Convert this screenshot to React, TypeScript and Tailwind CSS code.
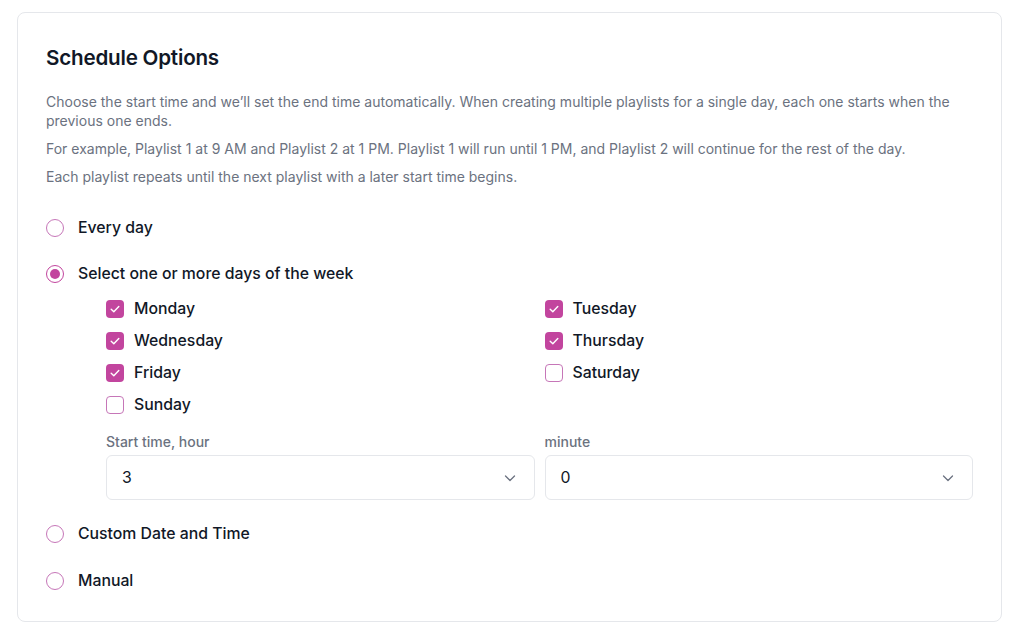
import React, { FC, useState } from 'react'

const days = ['Monday', 'Tuesday', 'Wednesday', 'Thursday', 'Friday', 'Saturday', 'Sunday']

const Radio: FC<{ checked: boolean; label: string; onClick: () => void }> = ({ checked, label, onClick }) => (
  <button className="flex items-center gap-[14px] h-[24px] text-left" onClick={onClick}>
    <span
      className={
        checked
          ? 'flex items-center justify-center w-[18px] h-[18px] rounded-full border-[1.5px] border-[#c2459e] bg-white'
          : 'w-[18px] h-[18px] rounded-full border-[1.5px] border-[#c676b8] bg-white'
      }
    >
      {checked && <span className="w-[10px] h-[10px] rounded-full bg-[#c2459e]" />}
    </span>
    <span className="text-[15.8px] font-medium text-[#111827]">{label}</span>
  </button>
)

const Checkbox: FC<{ checked: boolean; label: string; onClick: () => void }> = ({ checked, label, onClick }) => (
  <button className="flex items-center gap-[10px] h-[24px] text-left" onClick={onClick}>
    <span
      className={
        checked
          ? 'flex items-center justify-center w-[18px] h-[18px] rounded-[4px] bg-[#c2459e]'
          : 'w-[18px] h-[18px] rounded-[4px] border-[1.5px] border-[#c676b8] bg-white'
      }
    >
      {checked && (
        <svg width="12" height="12" viewBox="0 0 12 12" fill="none">
          <path d="M2.2 6.3 4.8 8.8 9.8 3.4" stroke="white" strokeWidth="1.4" strokeLinecap="round" strokeLinejoin="round" />
        </svg>
      )}
    </span>
    <span className="text-[15.8px] font-medium text-[#111827]">{label}</span>
  </button>
)

const Select: FC<{ label: string; value: string }> = ({ label, value }) => (
  <div className="flex flex-col gap-[3px]">
    <span className="text-[14px] leading-[20px] font-medium text-[#6b7280]">{label}</span>
    <div className="flex items-center justify-between h-[45px] pl-[15px] pr-[17px] rounded-[6px] border border-[#e5e7eb] bg-white">
      <span className="text-[15.8px] text-[#111827]">{value}</span>
      <svg width="14" height="14" viewBox="0 0 14 14" fill="none">
        <path d="M2.5 5 7 9.5 11.5 5" stroke="#6b7280" strokeWidth="1.3" strokeLinecap="round" strokeLinejoin="round" />
      </svg>
    </div>
  </div>
)

const App: FC = () => {
  const [mode, setMode] = useState('week')
  const [checked, setChecked] = useState<Record<string, boolean>>({
    Monday: true,
    Tuesday: true,
    Wednesday: true,
    Thursday: true,
    Friday: true,
    Saturday: false,
    Sunday: false,
  })

  const toggle = (d: string) => setChecked({ ...checked, [d]: !checked[d] })

  return (
    <div className="w-[1024px] h-[642px] bg-white pt-[12px] pl-[17px]" style={{ fontFamily: 'Inter, "Noto Sans", sans-serif' }}>
      <div className="w-[985px] rounded-[8px] border border-[#e5e7eb] bg-white px-[28px] pt-[31px] pb-[28px]">
        <h2 className="text-[20.6px] leading-[28px] font-semibold text-[#111827] tracking-[-0.2px]">Schedule Options</h2>
        <div className="mt-[20px] text-[14px] leading-[19px] text-[#6b7280]">
          <p>
            Choose the start time and we’ll set the end time automatically. When creating multiple playlists for a
            single day, each one starts when the previous one ends.
          </p>
          <p className="mt-[9px]">
            For example, Playlist 1 at 9 AM and Playlist 2 at 1 PM. Playlist 1 will run until 1 PM, and Playlist 2
            will continue for the rest of the day.
          </p>
          <p className="mt-[9px]">Each playlist repeats until the next playlist with a later start time begins.</p>
        </div>

        <div className="mt-[30px] flex flex-col">
          <Radio checked={mode === 'every'} label="Every day" onClick={() => setMode('every')} />
          <div className="mt-[22px]">
            <Radio checked={mode === 'week'} label="Select one or more days of the week" onClick={() => setMode('week')} />
          </div>
          <div className="pl-[60px] mt-[11px]">
            <div className="grid grid-cols-2 gap-x-[10px] gap-y-[8px]">
              {days.map((d) => (
                <Checkbox key={d} checked={checked[d]} label={d} onClick={() => toggle(d)} />
              ))}
            </div>
            <div className="grid grid-cols-2 gap-x-[10px] mt-[15px]">
              <Select label="Start time, hour" value="3" />
              <Select label="minute" value="0" />
            </div>
          </div>
          <div className="mt-[22px]">
            <Radio checked={mode === 'custom'} label="Custom Date and Time" onClick={() => setMode('custom')} />
          </div>
          <div className="mt-[23px]">
            <Radio checked={mode === 'manual'} label="Manual" onClick={() => setMode('manual')} />
          </div>
        </div>
      </div>
    </div>
  )
}

export default App
